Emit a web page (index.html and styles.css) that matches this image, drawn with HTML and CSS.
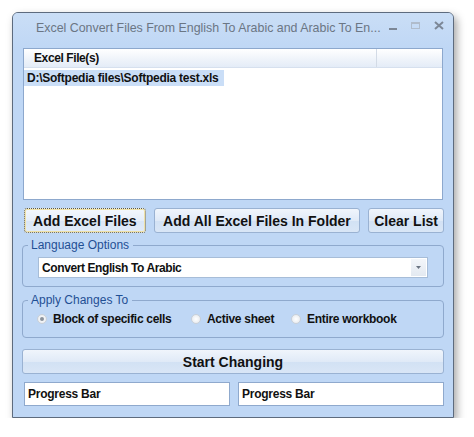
FILE: index.html
```html
<!DOCTYPE html>
<html>
<head>
<meta charset="utf-8">
<link rel="stylesheet" href="styles.css">
</head>
<body>
<div class="window">
  <div class="titlebar">
    <span class="title">Excel Convert Files From English To Arabic and Arabic To En...</span>
    <svg class="caption" width="60" height="10" viewBox="0 0 60 10">
      <rect x="3" y="7" width="8" height="2" fill="#7c8796"/>
      <rect x="25.5" y="1.5" width="8" height="6" fill="none" stroke="#b0bccb" stroke-width="1"/>
      <rect x="25" y="1" width="9" height="2" fill="#b0bccb"/>
      <path d="M49 1 L57 8 M57 1 L49 8" stroke="#7c8796" stroke-width="2" fill="none"/>
    </svg>
  </div>
  <div class="client">
    <div class="listview">
      <div class="lv-header">
        <div class="lv-col main">Excel File(s)</div>
        <div class="lv-col rest"></div>
      </div>
      <div class="lv-row"><span class="sel">D:\Softpedia files\Softpedia test.xls</span></div>
    </div>
    <div class="btn-row">
      <button class="btn focus">Add Excel Files</button>
      <button class="btn wide">Add All Excel Files In Folder</button>
      <button class="btn clear">Clear List</button>
    </div>
    <fieldset class="group lang">
      <legend>Language Options</legend>
      <div class="combo">
        <span class="combo-text">Convert English To Arabic</span>
        <span class="drop"><svg width="5" height="3" viewBox="0 0 5 3"><path d="M0 0 H5 L2.5 3 Z" fill="#6a7482"/></svg></span>
      </div>
    </fieldset>
    <fieldset class="group apply">
      <legend>Apply Changes To</legend>
      <div class="radios">
        <label class="radio r1"><span class="dot checked"></span>Block of specific cells</label>
        <label class="radio r2"><span class="dot"></span>Active sheet</label>
        <label class="radio r3"><span class="dot"></span>Entire workbook</label>
      </div>
    </fieldset>
    <button class="btn start">Start Changing</button>
    <div class="progress-row">
      <div class="progress">Progress Bar</div>
      <div class="progress">Progress Bar</div>
    </div>
  </div>
</div>
</body>
</html>
```
FILE: styles.css
```css
html, body {
  margin: 0;
  padding: 0;
  background: #ffffff;
}
body {
  font-family: "Liberation Sans", Arial, sans-serif;
  padding: 12px 0 0 12px;
}
*, *::before, *::after {
  box-sizing: border-box;
}
.window {
  width: 442px;
  height: 406px;
  border: 1px solid #5d6b7e;
  border-radius: 6px 6px 0 0;
  background: #bfd7f5;
  box-shadow: 3px 4px 8px rgba(0,0,0,0.35);
  display: flex;
  flex-direction: column;
}
.titlebar {
  height: 35px;
  flex: none;
  display: flex;
  align-items: flex-start;
  background: linear-gradient(#cadef6, #bfd7f5);
  border-radius: 5px 5px 0 0;
}
.title {
  margin: 7px 0 0 23px;
  font-size: 12.4px;
  line-height: 16px;
  color: #6b7684;
  white-space: nowrap;
}
.caption {
  margin: 8px 7px 0 auto;
  flex: none;
}
.client {
  padding: 0 9px 0 10px;
  display: flex;
  flex-direction: column;
}
.listview {
  height: 152px;
  margin-right: 1px;
  border: 1px solid #8da8cd;
  background: #ffffff;
}
.lv-header {
  height: 19px;
  display: flex;
  background: linear-gradient(#ffffff, #eef3fa 60%, #e4ecf7);
  border-bottom: 1px solid #d6e0ee;
}
.lv-col {
  font-size: 12px;
  font-weight: bold;
  letter-spacing: -0.4px;
  line-height: 18px;
  color: #111;
}
.lv-col.main {
  width: 353px;
  padding-left: 10px;
  border-right: 1px solid #d3dbe6;
}
.lv-row {
  height: 16px;
}
.sel {
  display: inline-block;
  background: #cadef7;
  font-size: 12px;
  font-weight: bold;
  letter-spacing: -0.25px;
  line-height: 16px;
  padding: 0 6px 0 3px;
  color: #111;
}
.btn {
  font-family: "Liberation Sans", Arial, sans-serif;
  font-weight: bold;
  font-size: 14px;
  color: #111;
  border: 1px solid #9ab2d2;
  border-radius: 3px;
  background: linear-gradient(#f0f5fc, #e0eaf7 50%, #d2e1f4 51%, #d9e6f6);
  padding: 0;
  height: 25px;
}
.btn-row {
  display: flex;
  gap: 8px;
  margin-top: 8px;
  margin-left: 1px;
}
.btn.focus {
  width: 122px;
  border: 1px dotted #5f5a3c;
  box-shadow: inset 0 0 0 1px #efe1a6;
  background: linear-gradient(#f4f8fd, #e6eef9 50%, #dae6f6 51%, #e1ebf8);
}
.btn.wide {
  width: 207px;
}
.btn.clear {
  width: 76px;
}
.group {
  margin: 4px 0 0 -1px;
  border: 1px solid #8fa9cd;
  border-radius: 4px;
  padding: 4px 15px 8px 15px;
  min-width: 0;
}
.group legend {
  font-size: 12px;
  line-height: 16px;
  color: #1f4f94;
  padding: 0 4px 0 3px;
  margin-left: -10px;
}
.combo {
  height: 21px;
  border: 1px solid #a7bdd8;
  background: #ffffff;
  display: flex;
  align-items: center;
}
.combo-text {
  flex: 1;
  font-size: 12px;
  font-weight: bold;
  letter-spacing: -0.4px;
  color: #111;
  padding-left: 3px;
}
.drop {
  width: 15px;
  height: 17px;
  margin-right: 1px;
  background: linear-gradient(#f3f6fa, #e3e9f1);
  display: flex;
  align-items: center;
  justify-content: center;
}
.group.apply {
  margin-top: 5px;
  padding: 3px 15px 10px 15px;
}
.radios {
  display: flex;
  height: 16px;
  align-items: center;
}
.radio {
  display: flex;
  align-items: center;
  font-size: 12px;
  font-weight: bold;
  letter-spacing: -0.3px;
  color: #111;
  white-space: nowrap;
}
.radio.r1 { margin-left: -1px; width: 154px; }
.radio.r2 { width: 100px; }
.dot {
  width: 10px;
  height: 10px;
  border-radius: 50%;
  border: 1px solid #c9d0d8;
  background: radial-gradient(#ffffff, #e3e7ec);
  margin-right: 6px;
  position: relative;
  flex: none;
}
.dot.checked::after {
  content: "";
  position: absolute;
  left: 2px;
  top: 2px;
  width: 4px;
  height: 4px;
  border-radius: 50%;
  background: #8a929c;
}
.btn.start {
  margin: 11px 0 0 -1px;
  height: 25px;
  font-size: 14px;
}
.progress-row {
  display: grid;
  grid-template-columns: 1fr 1fr;
  gap: 8px;
  margin-top: 8px;
  margin-left: 1px;
}
.progress {
  height: 24px;
  border: 1px solid #8fa9cd;
  background: #ffffff;
  font-size: 12px;
  font-weight: bold;
  letter-spacing: -0.25px;
  line-height: 22px;
  padding-left: 3px;
  color: #111;
}
```
